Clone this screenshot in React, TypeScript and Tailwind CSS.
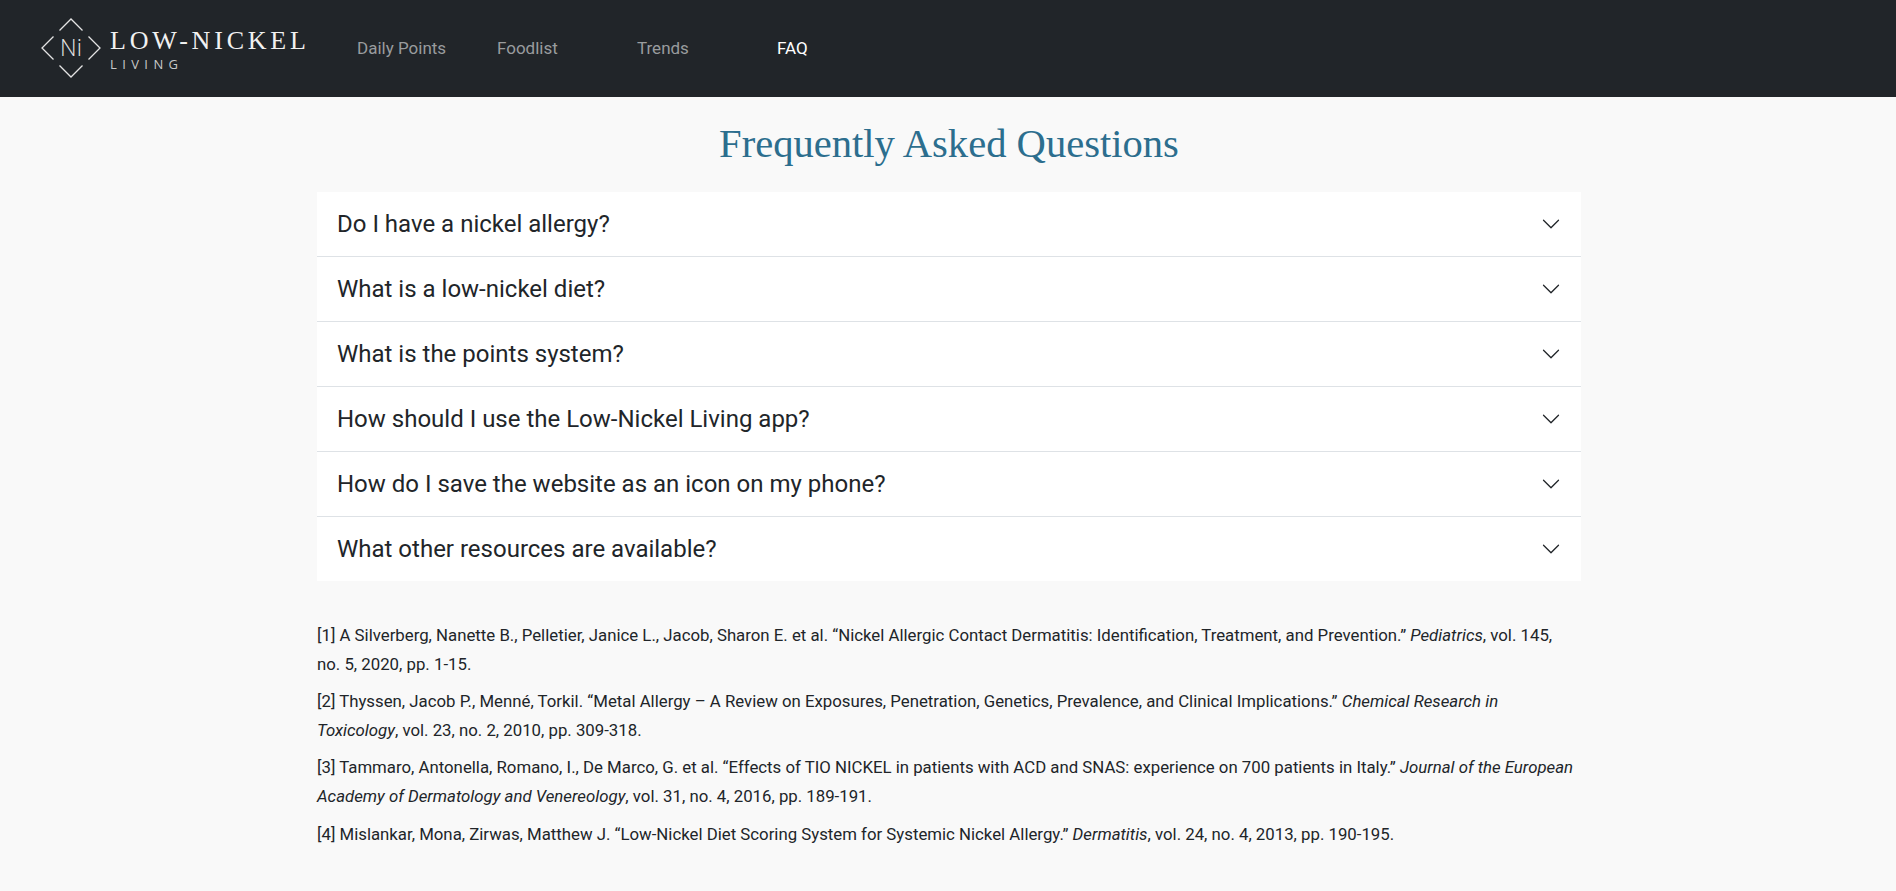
import React from 'react';

const questions = [
  'Do I have a nickel allergy?',
  'What is a low-nickel diet?',
  'What is the points system?',
  'How should I use the Low-Nickel Living app?',
  'How do I save the website as an icon on my phone?',
  'What other resources are available?',
];

function Logo() {
  return (
    <div className="flex w-[315px] items-center pl-[41px]">
      <div className="relative -mt-[2px] mr-[9px] h-[60px] w-[60px]">
        <svg width="60" height="60" viewBox="0 0 60 60" fill="none" stroke="#e4e4e4" strokeWidth="1.3">
          <path d="M18.5 12.5 L30 1 L41.5 12.5" />
          <path d="M12.5 18.5 L1 30 L12.5 41.5" />
          <path d="M47.5 18.5 L59 30 L47.5 41.5" />
          <path d="M18.5 47.5 L30 59 L41.5 47.5" />
        </svg>
        <span className="absolute inset-0 flex items-center justify-center font-['Open_Sans',sans-serif] text-[23px] font-light text-[#e4e4e4]">
          Ni
        </span>
      </div>
      <div className="mt-[2px] flex flex-col">
        <span className="font-['Liberation_Serif',serif] text-[26px] leading-[26px] tracking-[3.8px] text-[#f1f1f1]">LOW-NICKEL</span>
        <span className="mt-[2px] font-['Open_Sans',sans-serif] text-[13px] leading-[16px] tracking-[5.4px] text-[#c8c8c8]">LIVING</span>
      </div>
    </div>
  );
}

function Chevron() {
  return (
    <svg width="20" height="20" viewBox="0 0 16 16" fill="#212529">
      <path fillRule="evenodd" d="M1.646 4.646a.5.5 0 0 1 .708 0L8 10.293l5.646-5.647a.5.5 0 0 1 .708.708l-6 6a.5.5 0 0 1-.708 0l-6-6a.5.5 0 0 1 0-.708z" />
    </svg>
  );
}

export default function App() {
  return (
    <div className="min-h-[891px] bg-[#f9f9f9] font-['Roboto',sans-serif] text-[#212529]">
      <nav className="flex h-[97px] items-center bg-[#212529]">
        <Logo />
        <div className="ml-[42px] flex text-[17px] text-[#999c9e]">
          <a className="w-[140px]">Daily Points</a>
          <a className="w-[140px]">Foodlist</a>
          <a className="w-[140px]">Trends</a>
          <a className="text-white">FAQ</a>
        </div>
      </nav>

      <main className="ml-[317px] w-[1264px]">
        <h1 className="pt-[23px] pb-[24px] text-center font-['Liberation_Serif',serif] text-[40.6px] leading-[48px] text-[#2c6e8e]">
          Frequently Asked Questions
        </h1>

        <div className="bg-white">
          {questions.map((q, i) => (
            <div key={q} className={i > 0 ? 'border-t border-[#dee2e6]' : ''}>
              <div className="flex h-[64px] items-center justify-between px-[20px] text-2xl">
                <span>{q}</span>
                <Chevron />
              </div>
            </div>
          ))}
        </div>

        <div className="mt-[40px] pr-[3px] text-[16.8px] leading-[28.6px]">
          <p className="mb-[9px]">
            [1] A Silverberg, Nanette B., Pelletier, Janice L., Jacob, Sharon E. et al. “Nickel Allergic Contact Dermatitis: Identification, Treatment, and Prevention.” <em>Pediatrics</em>, vol. 145, no. 5, 2020, pp. 1-15.
          </p>
          <p className="mb-[9px]">
            [2] Thyssen, Jacob P., Menné, Torkil. “Metal Allergy – A Review on Exposures, Penetration, Genetics, Prevalence, and Clinical Implications.” <em>Chemical Research in Toxicology</em>, vol. 23, no. 2, 2010, pp. 309-318.
          </p>
          <p className="mb-[9px]">
            [3] Tammaro, Antonella, Romano, I., De Marco, G. et al. “Effects of TIO NICKEL in patients with ACD and SNAS: experience on 700 patients in Italy.” <em>Journal of the European Academy of Dermatology and Venereology</em>, vol. 31, no. 4, 2016, pp. 189-191.
          </p>
          <p>
            [4] Mislankar, Mona, Zirwas, Matthew J. “Low-Nickel Diet Scoring System for Systemic Nickel Allergy.” <em>Dermatitis</em>, vol. 24, no. 4, 2013, pp. 190-195.
          </p>
        </div>
      </main>
    </div>
  );
}
